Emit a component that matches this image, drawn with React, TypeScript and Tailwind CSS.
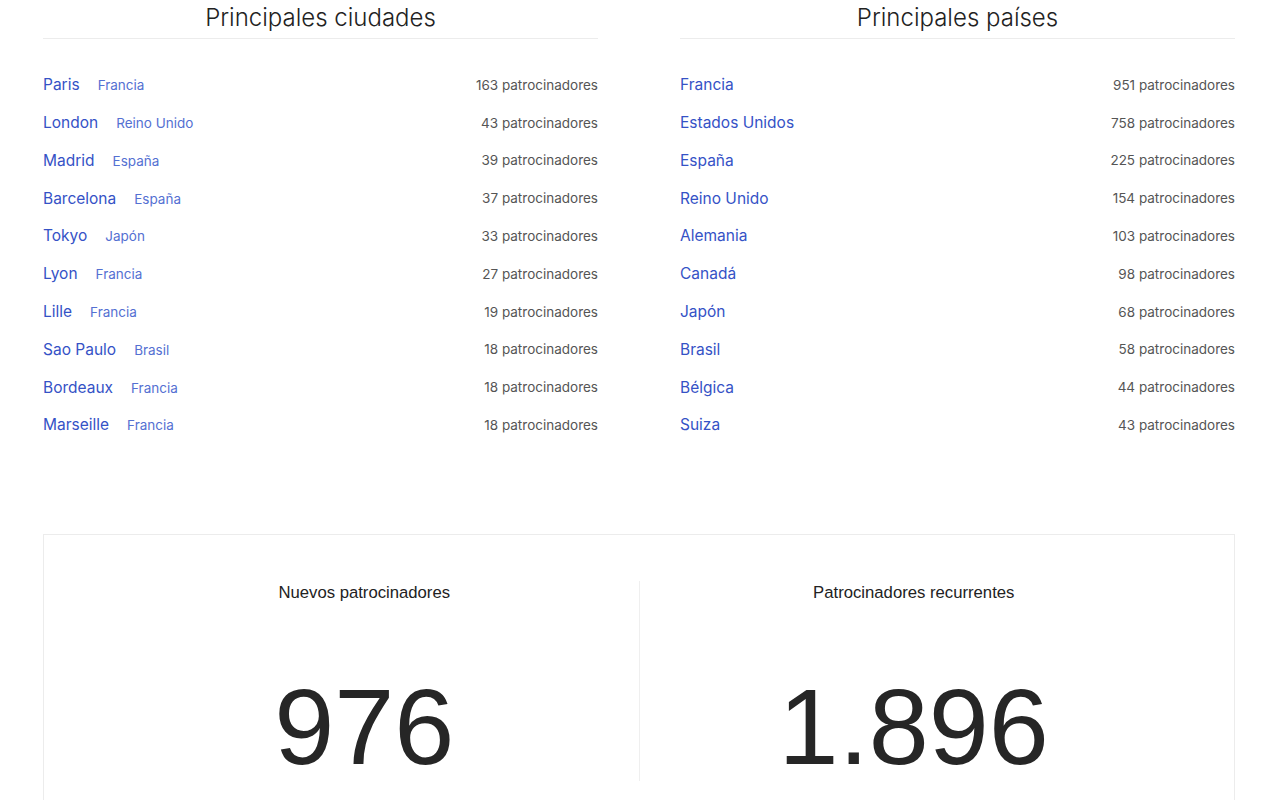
const cities = [
  { name: "Paris", country: "Francia", count: 163 },
  { name: "London", country: "Reino Unido", count: 43 },
  { name: "Madrid", country: "España", count: 39 },
  { name: "Barcelona", country: "España", count: 37 },
  { name: "Tokyo", country: "Japón", count: 33 },
  { name: "Lyon", country: "Francia", count: 27 },
  { name: "Lille", country: "Francia", count: 19 },
  { name: "Sao Paulo", country: "Brasil", count: 18 },
  { name: "Bordeaux", country: "Francia", count: 18 },
  { name: "Marseille", country: "Francia", count: 18 },
];

const countries = [
  { name: "Francia", count: 951 },
  { name: "Estados Unidos", count: 758 },
  { name: "España", count: 225 },
  { name: "Reino Unido", count: 154 },
  { name: "Alemania", count: 103 },
  { name: "Canadá", count: 98 },
  { name: "Japón", count: 68 },
  { name: "Brasil", count: 58 },
  { name: "Bélgica", count: 44 },
  { name: "Suiza", count: 43 },
];

function Row({ name, sub, count }: { name: string; sub?: string; count: number }) {
  return (
    <li className="flex h-[37.8px] items-center justify-between">
      <div className="flex items-baseline gap-[18px]">
        <a className="text-[15.5px] text-[#3552c6]">{name}</a>
        {sub && <span className="text-[13.5px] text-[#5470d2]">{sub}</span>}
      </div>
      <span className="text-[13.5px] text-[#555]">{count} patrocinadores</span>
    </li>
  );
}

function Column({ title, children }: { title: string; children: React.ReactNode }) {
  return (
    <section className="flex-1">
      <h2 className="mt-[2px] border-b border-[#ececec] pb-1 text-center text-2xl leading-8 font-light text-[#222]">
        {title}
      </h2>
      <ul className="mt-[27px]">{children}</ul>
    </section>
  );
}

function Stat({ label, value, divider }: { label: string; value: string; divider?: boolean }) {
  return (
    <div className={`flex-1 flex flex-col items-center ${divider ? "border-l border-[#efefef]" : ""}`}>
      <h3 className="text-[16.7px] leading-6 text-[#222] font-['Liberation_Sans',Arial,sans-serif]">
        {label}
      </h3>
      <div className="mt-[68px] text-[108px] leading-none text-[#262626] font-['Liberation_Sans',Arial,sans-serif]">
        {value}
      </div>
    </div>
  );
}

export default function App() {
  return (
    <div className="min-h-screen bg-white font-['Inter',sans-serif]">
      <div className="ml-[43px] w-[1192px]">
        <div className="flex gap-[82px]">
          <Column title="Principales ciudades">
            {cities.map((c) => (
              <Row key={c.name} name={c.name} sub={c.country} count={c.count} />
            ))}
          </Column>
          <Column title="Principales países">
            {countries.map((c) => (
              <Row key={c.name} name={c.name} count={c.count} />
            ))}
          </Column>
        </div>

        <div className="mt-[90px] border border-[#ececec] px-[46px] pt-[46px] pb-10">
          <div className="flex">
            <Stat label="Nuevos patrocinadores" value="976" />
            <Stat label="Patrocinadores recurrentes" value="1.896" divider />
          </div>
        </div>
      </div>
    </div>
  );
}
